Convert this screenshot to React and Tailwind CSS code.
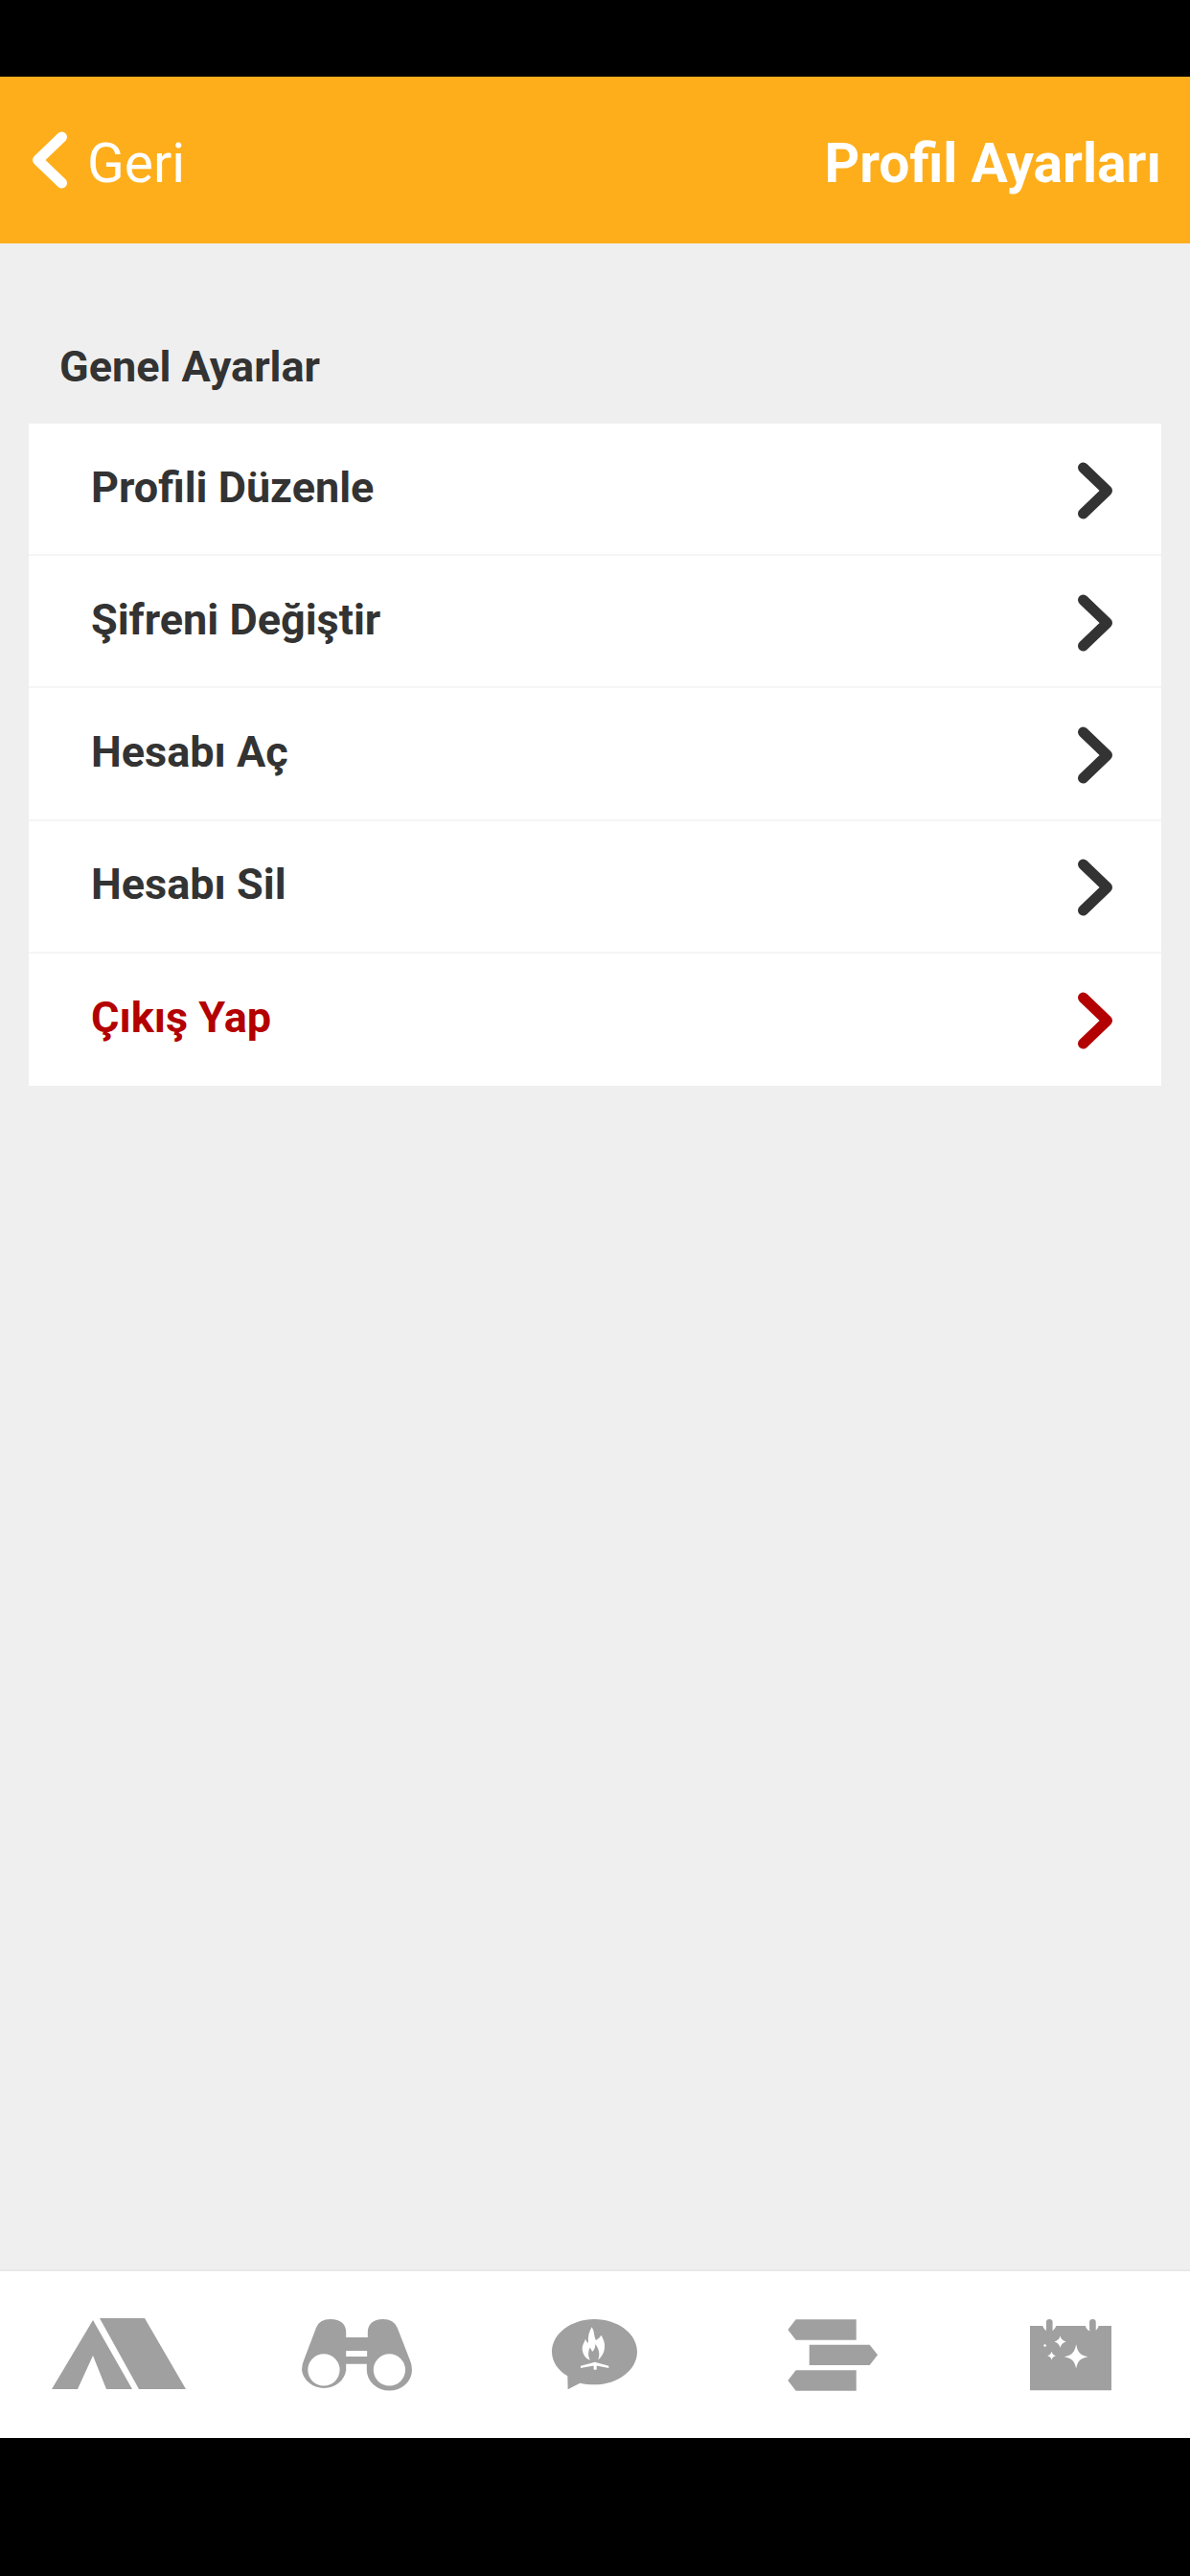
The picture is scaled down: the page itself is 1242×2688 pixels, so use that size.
const rows = [
  { label: 'Profili Düzenle' },
  { label: 'Şifreni Değiştir' },
  { label: 'Hesabı Aç' },
  { label: 'Hesabı Sil' },
  { label: 'Çıkış Yap', danger: true },
]

const Chevron = ({ className }) => (
  <svg viewBox="0 0 37 60" className={className} fill="none" stroke="currentColor" strokeWidth="11" strokeLinecap="round" strokeLinejoin="round">
    <path d="M6 6 L31 30 L6 54" />
  </svg>
)

const TentIcon = () => (
  <svg viewBox="0 0 142 76" className="w-[142px] h-[76px]" fill="#a0a0a0">
    <path d="M44 2 L85 74 L58 74 L44 39 L28 74 L1 74 Z" />
    <path d="M51 0 L98 0 L141 74 L92 74 Z" />
  </svg>
)

const BinocularsIcon = () => (
  <svg viewBox="943 205 346 228" className="w-[115px] h-[76px]" fill="#a0a0a0">
    <path d="M943 367 Q943 350 950 335 L988 235 Q998 208 1033 208 Q1082 210 1082 250 L1082 265 L1150 265 L1150 250 Q1150 210 1198 208 Q1232 208 1243 235 L1282 335 Q1289 350 1289 367 A71 65 0 0 1 1147 367 L1147 348 L1082 348 L1082 367 A70 65 0 0 1 943 367 Z" />
    <circle cx="1012" cy="367" r="50" fill="#fff" />
    <circle cx="1218" cy="367" r="50" fill="#fff" />
    <rect x="1082" y="307" width="66" height="18" fill="#fff" />
  </svg>
)

const ChatIcon = () => (
  <svg viewBox="170 120 267 222" className="w-[89px] h-[74px]" fill="#a0a0a0">
    <path d="M220 340 L219 298 C188 280 170 252 170 222 C170 166 230 120 303 120 C377 120 437 166 437 222 C437 279 377 325 303 325 C288 325 272 323 258 320 Z" />
    <g transform="translate(210 120)" fill="#fff">
      <path d="M85 25 C95 42 90 52 98 66 C104 62 110 58 114 50 C122 62 127 76 125 90 C123 108 114 120 104 128 C112 112 108 94 96 78 C96 90 92 98 86 102 C84 96 82 92 78 90 C74 102 72 116 80 128 C66 124 56 110 55 92 C55 80 62 72 65 62 C68 68 70 72 74 74 C72 56 76 40 85 25 Z" />
      <path d="M50 146 L82 138 L94 134 L108 138 L138 146 L138 153 L103 146 L100 146 L100 158 L91 158 L91 146 L88 146 L50 153 Z" />
    </g>
  </svg>
)

const SignsIcon = () => (
  <svg viewBox="130 117 282 225" className="w-[94px] h-[75px]" fill="#a0a0a0">
    <path d="M156 118 L345 118 L345 182 L156 182 L131 150 Z" />
    <path d="M198 197 L387 197 L412 229 L387 261 L198 261 Z" />
    <path d="M156 277 L345 277 L345 341 L156 341 L131 309 Z" />
  </svg>
)

const CalendarIcon = () => (
  <svg viewBox="890 115 256 227" className="w-[85px] h-[76px]" fill="#a0a0a0">
    <path d="M890 138 L930 138 A22 24 0 0 0 972 138 L1064 138 A22 24 0 0 0 1106 138 L1146 138 L1146 341 L890 341 Z" />
    <rect x="941" y="117" width="20" height="42" rx="10" />
    <rect x="1077" y="117" width="20" height="42" rx="10" />
    <g fill="#fff">
      <path d="M1035 196 C1040 222 1048 230 1072 235 C1048 240 1040 248 1035 272 C1030 248 1022 240 998 235 C1022 230 1030 222 1035 196 Z" />
      <path d="M985 170 C988 180 993 185 1003 188 C993 191 988 197 985 207 C982 197 977 191 967 188 C977 185 982 180 985 170 Z" />
      <path d="M958 219 C960 226 963 230 971 232 C963 234 960 238 958 245 C956 238 953 234 945 232 C953 230 956 226 958 219 Z" />
      <circle cx="937" cy="200" r="4" />
    </g>
  </svg>
)

const App = () => {
  return (
    <div className="h-[2688px] flex flex-col bg-[#efefef] font-['Roboto',sans-serif]">
      <div className="h-[80px] bg-black" />

      <header className="h-[174px] bg-[#feae1b] flex items-center justify-between pl-[33px] pr-[30px] text-white">
        <div className="flex items-center">
          <Chevron className="w-[38px] h-[60px] -scale-x-100" />
          <span className="ml-[20px] pt-[6px] text-[57px] leading-none font-normal">Geri</span>
        </div>
        <h1 className="pt-[6px] text-[57px] leading-none font-bold">Profil Ayarları</h1>
      </header>

      <main className="flex-1 px-[30px]">
        <h2 className="pt-[99px] pl-[32px] pb-[29px] text-[45px] leading-[60px] font-bold text-[#333333]">
          Genel Ayarlar
        </h2>
        <div className="bg-white flex flex-col">
          {rows.map((row, i) => (
            <div
              key={row.label}
              className={`h-[138.2px] flex items-center justify-between pl-[65px] pr-[50px] border-[#f5f5f5] ${
                i < rows.length - 1 ? 'border-b-2' : ''
              } ${row.danger ? 'text-[#b30000]' : 'text-[#333333]'}`}
            >
              <span className="pb-[4px] text-[45px] leading-none font-bold">{row.label}</span>
              <Chevron className="w-[38px] h-[60px] mt-[3px]" />
            </div>
          ))}
        </div>
      </main>

      <nav className="h-[176px] bg-white border-t-2 border-[#e8e8e8] grid grid-cols-5 items-center">
        <div className="flex justify-center"><TentIcon /></div>
        <div className="flex justify-center"><BinocularsIcon /></div>
        <div className="flex justify-center"><ChatIcon /></div>
        <div className="flex justify-center"><SignsIcon /></div>
        <div className="flex justify-center"><CalendarIcon /></div>
      </nav>

      <div className="h-[144px] bg-black" />
    </div>
  )
}

export default App
